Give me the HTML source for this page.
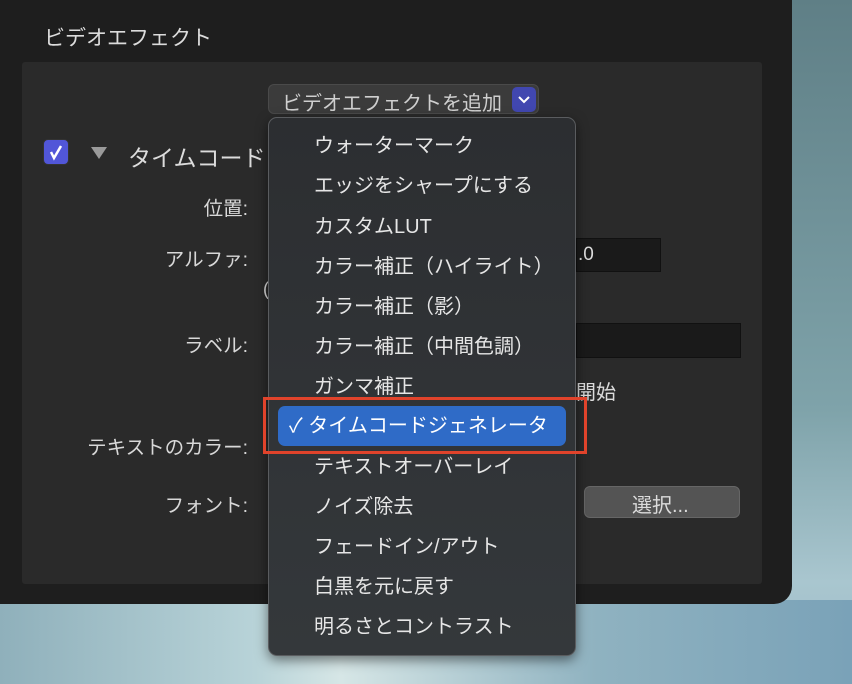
<html><head><style>
body{margin:0;width:852px;height:684px;overflow:hidden;position:relative;font-family:"Liberation Sans","Noto Sans CJK JP",sans-serif;
background:linear-gradient(180deg,#5f7f86 0%,#7fa3aa 60%,#a9c6cf 85%,#9dbcc8 100%);}
.bg2{position:absolute;left:0;top:600px;width:852px;height:84px;background:linear-gradient(90deg,#8fb0bb,#b8d3d8 30%,#d6e6e6 40%,#8fb2c0 70%,#7aa2b8);}
.win{position:absolute;left:0;top:-20px;width:792px;height:624px;background:#1e1e1e;border-radius:0 0 18px 0;}
.panel{position:absolute;left:22px;top:62px;width:740px;height:522px;background:#2a2a2a;border-radius:3px;}
.t{position:absolute;color:#dcdcdc;white-space:nowrap;}
.lbl{position:absolute;right:604px;color:#d8d8d8;font-size:19.5px;white-space:nowrap;}
.menu{position:absolute;left:268px;top:117px;width:306px;height:537px;background:linear-gradient(180deg,#2c2e31,#34383b);border:1px solid #5a5c5f;border-radius:9px;box-shadow:0 4px 12px rgba(0,0,0,.5);}
.it{position:absolute;left:45px;font-size:20px;color:#e6e6e6;white-space:nowrap;line-height:24px;}
</style></head><body>
<div class="bg2"></div>
<div class="win"></div>
<div class="panel"></div>
<div class="t" style="left:44px;top:22px;font-size:21px">ビデオエフェクト</div>
<div style="position:absolute;left:268px;top:84px;width:271px;height:30px;background:#3b3b3b;border:1px solid #4a4a4a;border-radius:6px;box-sizing:border-box"></div>
<div class="t" style="left:282px;top:87px;font-size:20px;color:#cfcfcf">ビデオエフェクトを追加</div>
<div style="position:absolute;left:512px;top:87px;width:24px;height:25px;background:#4147b0;border-radius:5px"></div>
<svg style="position:absolute;left:512px;top:87px" width="24" height="25"><path d="M7 10l5 5 5-5" stroke="#fff" stroke-width="2" fill="none"/></svg>
<div style="position:absolute;left:43px;top:139px;width:26px;height:26px;background:#5156d8;border-radius:5px;border:1px solid #333;box-sizing:border-box"></div>
<svg style="position:absolute;left:43px;top:139px" width="26" height="26"><path d="M8 13l3 6 7-12" stroke="#fff" stroke-width="2.5" fill="none"/></svg>
<svg style="position:absolute;left:90px;top:146px" width="18" height="14"><path d="M1 1h16L9 13z" fill="#9a9a9a"/></svg>
<div class="t" style="left:128px;top:139px;font-size:23px">タイムコード</div>
<div class="lbl" style="top:192px">位置:</div>
<div class="lbl" style="top:243px">アルファ:</div>
<div class="lbl" style="top:329px">ラベル:</div>
<div class="lbl" style="top:431px">テキストのカラー:</div>
<div class="lbl" style="top:489px">フォント:</div>
<div class="t" style="left:263px;top:279px;font-size:18px">(</div>
<div style="position:absolute;left:576px;top:238px;width:85px;height:34px;background:#1a1a1a;border:1px solid #111;box-sizing:border-box"></div>
<div class="t" style="left:578px;top:244px;font-size:19px">.0</div>
<div style="position:absolute;left:576px;top:323px;width:165px;height:35px;background:#1a1a1a;border:1px solid #111;box-sizing:border-box"></div>
<div class="t" style="left:576px;top:376px;font-size:20px">開始</div>
<div style="position:absolute;left:584px;top:486px;width:156px;height:32px;background:#545454;border:1px solid #666;border-radius:6px;box-sizing:border-box"></div>
<div class="t" style="left:632px;top:489px;font-size:20px">選択...</div>
<div class="menu">
<div class="it" style="top:16px">ウォーターマーク</div>
<div class="it" style="top:56px">エッジをシャープにする</div>
<div class="it" style="top:97px">カスタムLUT</div>
<div class="it" style="top:137px">カラー補正（ハイライト）</div>
<div class="it" style="top:177px">カラー補正（影）</div>
<div class="it" style="top:217px">カラー補正（中間色調）</div>
<div class="it" style="top:257px">ガンマ補正</div>
<div style="position:absolute;left:9px;top:288px;width:288px;height:40px;background:#2f6bc7;border-radius:7px"></div>
<div class="it" style="left:20px;top:296px;color:#fff">✓ タイムコードジェネレータ</div>
<div class="it" style="top:337px">テキストオーバーレイ</div>
<div class="it" style="top:377px">ノイズ除去</div>
<div class="it" style="top:417px">フェードイン/アウト</div>
<div class="it" style="top:457px">白黒を元に戻す</div>
<div class="it" style="top:497px">明るさとコントラスト</div>
</div>
<div style="position:absolute;left:263px;top:397px;width:324px;height:57px;border:3px solid #e0432b;box-sizing:border-box"></div>
</body></html>
